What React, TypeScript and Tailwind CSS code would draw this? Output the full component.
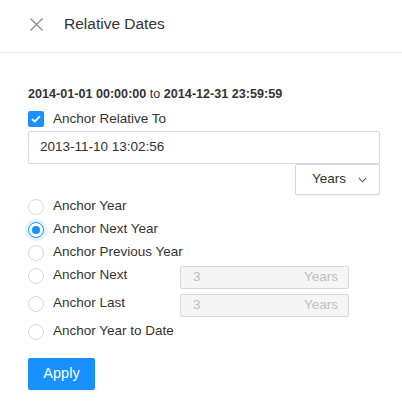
import React, { useState } from "react";

const options = [
  { id: "year", label: "Anchor Year", kind: "plain" },
  { id: "next-year", label: "Anchor Next Year", kind: "plain" },
  { id: "prev-year", label: "Anchor Previous Year", kind: "plain" },
  { id: "next", label: "Anchor Next", kind: "count" },
  { id: "last", label: "Anchor Last", kind: "count" },
  { id: "ytd", label: "Anchor Year to Date", kind: "tall" },
];

const Radio: React.FC<{ checked: boolean }> = ({ checked }) =>
  checked ? (
    <span className="flex h-4 w-4 shrink-0 items-center justify-center rounded-full border border-[#1890ff] bg-white shadow-[0_0_0_3px_rgba(24,144,255,0.12)]">
      <span className="h-2 w-2 rounded-full bg-[#1890ff]" />
    </span>
  ) : (
    <span className="h-4 w-4 shrink-0 rounded-full border border-[#d9d9d9] bg-white" />
  );

export default function App() {
  const [selected, setSelected] = useState("next-year");

  return (
    <div
      className="h-[406px] w-[402px] bg-white text-[#333]"
      style={{ fontFamily: '"Liberation Sans", Arial, sans-serif' }}
    >
      {/* Header */}
      <div className="flex h-[53px] items-center border-b border-[#ebebeb] pl-[30px]">
        <svg width="13" height="13" viewBox="0 0 13 13" className="mb-[4px]">
          <path d="M0.5 0.5 L12.5 12.5 M12.5 0.5 L0.5 12.5" stroke="#8c8c8c" strokeWidth="1.3" fill="none" />
        </svg>
        <span className="ml-[21px] mb-[4px] text-[15.5px] text-[#333]">Relative Dates</span>
      </div>

      <div className="px-[28px] pr-[22px] pt-[34px]">
        <div className="whitespace-nowrap text-[12.6px] leading-[15px] text-[#333]">
          <span className="font-bold">2014-01-01 00:00:00</span> to{" "}
          <span className="font-bold">2014-12-31 23:59:59</span>
        </div>

        <div className="mt-[7px] flex h-[20px] items-center">
          <span className="flex h-4 w-4 items-center justify-center rounded-[2px] bg-[#1890ff]">
            <svg width="10" height="8" viewBox="0 0 10 8">
              <path d="M1 4 L3.8 6.6 L9 1.2" stroke="white" strokeWidth="1.8" fill="none" />
            </svg>
          </span>
          <span className="ml-[9px] text-[13.5px]">Anchor Relative To</span>
        </div>

        <div className="mt-[2px] flex h-[33px] items-center rounded-[2px] border border-[#d9d9d9] px-[11px] text-[13.5px]">
          2013-11-10 13:02:56
        </div>

        <div className="flex justify-end">
          <button className="flex h-[31px] w-[85px] items-center rounded-[2px] border border-[#d9d9d9] bg-white pl-[16px] text-[13.5px] text-[#333] shadow-[0_1px_2px_rgba(0,0,0,0.06)]">
            Years
            <svg width="9" height="6" viewBox="0 0 9 6" className="ml-[12px]">
              <path d="M0.8 0.8 L4.5 4.8 L8.2 0.8" stroke="#555" strokeWidth="1.1" fill="none" />
            </svg>
          </button>
        </div>

        <div className="flex flex-col">
          {options.map((o) => (
            <div
              key={o.id}
              onClick={() => setSelected(o.id)}
              className={
                o.kind === "plain"
                  ? "flex h-[23px] cursor-pointer items-start"
                  : "flex h-[28px] cursor-pointer items-start"
              }
            >
              <div className="flex h-[23px] items-center">
                <Radio checked={selected === o.id} />
                <span className="ml-[9px] w-[127px] whitespace-nowrap text-[13.5px]">{o.label}</span>
              </div>
              {o.kind === "count" && (
                <div className="mt-[2px] flex h-[23px] w-[169px] items-center justify-between rounded-[2px] border border-[#d9d9d9] bg-[#f5f5f5] px-[12px] pr-[10px] text-[13.5px] text-[#bfbfbf]">
                  <span>3</span>
                  <span>Years</span>
                </div>
              )}
            </div>
          ))}
        </div>

        <button className="mt-[10px] flex h-[32px] w-[67px] items-center justify-center rounded-[2px] bg-[#1890ff] text-[14.5px] text-white shadow-[0_2px_0_rgba(0,0,0,0.04)]">
          Apply
        </button>
      </div>
    </div>
  );
}
